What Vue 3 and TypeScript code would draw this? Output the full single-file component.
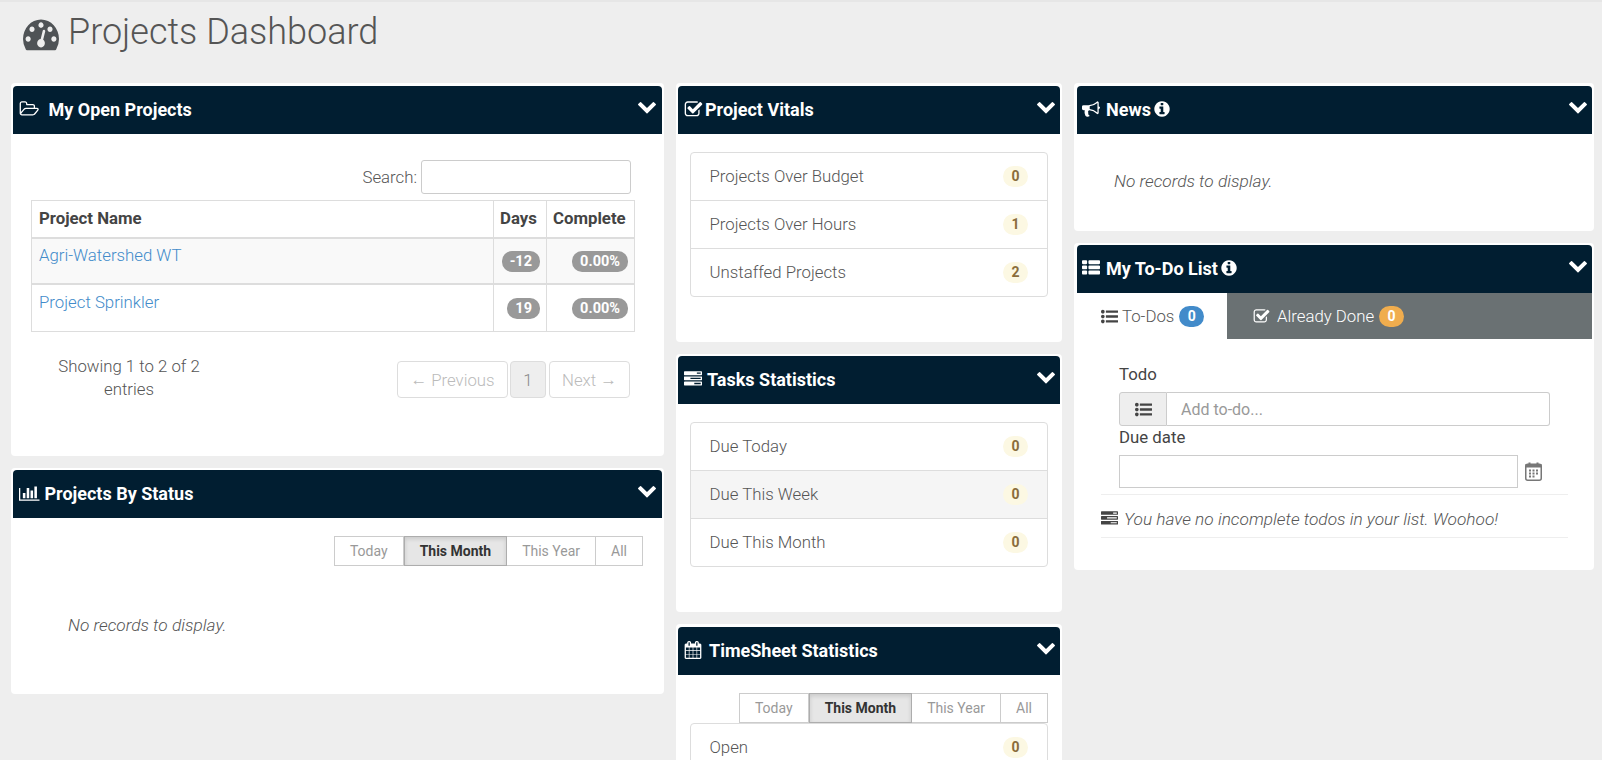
<script setup lang="ts">
interface Icon {
  w: number
  d: string
}

const icons: Record<string, Icon> = {
  gauge: { w: 1792, d: 'M384 1152q0-53-37.5-90.5t-90.5-37.5-90.5 37.5-37.5 90.5 37.5 90.5 90.5 37.5 90.5-37.5 37.5-90.5zm192-448q0-53-37.5-90.5t-90.5-37.5-90.5 37.5-37.5 90.5 37.5 90.5 90.5 37.5 90.5-37.5 37.5-90.5zm428 481l101-382q6-26-7.5-48.5t-38.5-29.5-48 6.5-30 39.5l-101 382q-60 5-107 43.5t-63 98.5q-20 77 20 146t117 89 146-20 89-117q16-60-6-117t-72-91zm660-33q0-53-37.5-90.5t-90.5-37.5-90.5 37.5-37.5 90.5 37.5 90.5 90.5 37.5 90.5-37.5 37.5-90.5zm-640-640q0-53-37.5-90.5t-90.5-37.5-90.5 37.5-37.5 90.5 37.5 90.5 90.5 37.5 90.5-37.5 37.5-90.5zm448 192q0-53-37.5-90.5t-90.5-37.5-90.5 37.5-37.5 90.5 37.5 90.5 90.5 37.5 90.5-37.5 37.5-90.5zm320 448q0 261-141 483-19 29-54 29h-1402q-35 0-54-29-141-221-141-483 0-182 71-348t191-286 286-191 348-71 348 71 286 191 191 286 71 348z' },
  chevron: { w: 1792, d: 'M1683 808l-742 741q-19 19-45 19t-45-19l-742-741q-19-19-19-45.5t19-45.5l166-165q19-19 45-19t45 19l531 531 531-531q19-19 45-19t45 19l166 165q19 19 19 45.5t-19 45.5z' },
  folder: { w: 2048, d: 'M1845 931q0-35-53-35h-1088q-40 0-85.5 21.5t-71.5 52.5l-294 363q-18 24-18 40 0 35 53 35h1088q40 0 86-22t71-53l294-363q18-22 18-39zm-1141-163h768v-160q0-40-28-68t-68-28h-576q-40 0-68-28t-28-68v-64q0-40-28-68t-68-28h-320q-40 0-68 28t-28 68v853l256-315q44-53 116-87.5t140-34.5zm1269 163q0 62-46 120l-295 363q-43 53-116 87.5t-140 34.5h-1088q-92 0-158-66t-66-158v-960q0-92 66-158t158-66h320q92 0 158 66t66 158v32h544q92 0 158 66t66 158v160h192q54 0 99 24.5t67 70.5q15 32 15 68z' },
  bars: { w: 2048, d: 'M640 896v512h-256v-512h256zm384-512v1024h-256v-1024h256zm1024 1152v128h-2048v-1280h128v1152h1920zm-640-896v768h-256v-768h256zm384-384v1152h-256v-1152h256z' },
  check: { w: 1792, d: 'M1472 930v318q0 119-84.5 203.5t-203.5 84.5h-832q-119 0-203.5-84.5t-84.5-203.5v-832q0-119 84.5-203.5t203.5-84.5h832q63 0 117 25 15 7 18 23 3 17-9 29l-49 49q-10 10-23 10-3 0-9-2-23-6-45-6h-832q-66 0-113 47t-47 113v832q0 66 47 113t113 47h832q66 0 113-47t47-113v-254q0-13 9-22l64-64q10-10 23-10 6 0 12 3 20 8 20 29zm231-489l-814 814q-24 24-57 24t-57-24l-430-430q-24-24-24-57t24-57l110-110q24-24 57-24t57 24l263 263 647-647q24-24 57-24t57 24l110 110q24 24 24 57t-24 57z' },
  tasks: { w: 1792, d: 'M1024 1408h640v-128h-640v128zm-384-512h1024v-128h-1024v128zm640-512h384v-128h-384v128zm512 832v256q0 26-19 45t-45 19h-1664q-26 0-45-19t-19-45v-256q0-26 19-45t45-19h1664q26 0 45 19t19 45zm0-512v256q0 26-19 45t-45 19h-1664q-26 0-45-19t-19-45v-256q0-26 19-45t45-19h1664q26 0 45 19t19 45zm0-512v256q0 26-19 45t-45 19h-1664q-26 0-45-19t-19-45v-256q0-26 19-45t45-19h1664q26 0 45 19t19 45z' },
  calendar: { w: 1792, d: 'M192 1664h288v-288h-288v288zm352 0h320v-288h-320v288zm-352-352h288v-320h-288v320zm352 0h320v-320h-320v320zm-352-384h288v-288h-288v288zm736 736h320v-288h-320v288zm-384-736h320v-288h-320v288zm768 736h288v-288h-288v288zm-384-352h320v-320h-320v320zm-352-864v-288q0-13-9.5-22.5t-22.5-9.5h-64q-13 0-22.5 9.5t-9.5 22.5v288q0 13 9.5 22.5t22.5 9.5h64q13 0 22.5-9.5t9.5-22.5zm736 864h288v-320h-288v320zm-384-384h320v-288h-320v288zm384 0h288v-288h-288v288zm32-480v-288q0-13-9.5-22.5t-22.5-9.5h-64q-13 0-22.5 9.5t-9.5 22.5v288q0 13 9.5 22.5t22.5 9.5h64q13 0 22.5-9.5t9.5-22.5zm384-64v1280q0 52-38 90t-90 38h-1408q-52 0-90-38t-38-90v-1280q0-52 38-90t90-38h128v-96q0-66 47-113t113-47h64q66 0 113 47t47 113v96h384v-96q0-66 47-113t113-47h64q66 0 113 47t47 113v96h128q52 0 90 38t38 90z' },
  bullhorn: { w: 1792, d: 'M1664 640q53 0 90.5 37.5t37.5 90.5-37.5 90.5-90.5 37.5v384q0 52-38 90t-90 38q-417-347-812-380-58 19-91 66t-31 100.5 40 92.5q-20 33-23 65.5t6 58 33.5 55 48 50 61.5 50.5q-29 58-111.5 83t-168.5 11.5-132-55.5q-7-23-29.5-87.5t-32-94.5-23-89-15-101 3.5-98.5 22-110.5h-122q-66 0-113-47t-47-113v-192q0-66 47-113t113-47h480q435 0 896-384 52 0 90 38t38 90v384zm-128 604v-954q-394 302-768 343v270q377 42 768 341z' },
  info: { w: 1792, d: 'M1152 1376v-160q0-14-9-23t-23-9h-96v-512q0-14-9-23t-23-9h-320q-14 0-23 9t-9 23v160q0 14 9 23t23 9h96v320h-96q-14 0-23 9t-9 23v160q0 14 9 23t23 9h448q14 0 23-9t9-23zm-128-896v-160q0-14-9-23t-23-9h-192q-14 0-23 9t-9 23v160q0 14 9 23t23 9h192q14 0 23-9t9-23zm640 416q0 209-103 385.5t-279.5 279.5-385.5 103-385.5-103-279.5-279.5-103-385.5 103-385.5 279.5-279.5 385.5-103 385.5 103 279.5 279.5 103 385.5z' },
  thList: { w: 1792, d: 'M512 1248v192q0 40-28 68t-68 28h-320q-40 0-68-28t-28-68v-192q0-40 28-68t68-28h320q40 0 68 28t28 68zm0-512v192q0 40-28 68t-68 28h-320q-40 0-68-28t-28-68v-192q0-40 28-68t68-28h320q40 0 68 28t28 68zm1280 512v192q0 40-28 68t-68 28h-960q-40 0-68-28t-28-68v-192q0-40 28-68t68-28h960q40 0 68 28t28 68zm-1280-1024v192q0 40-28 68t-68 28h-320q-40 0-68-28t-28-68v-192q0-40 28-68t68-28h320q40 0 68 28t28 68zm1280 512v192q0 40-28 68t-68 28h-960q-40 0-68-28t-28-68v-192q0-40 28-68t68-28h960q40 0 68 28t28 68zm0-512v192q0 40-28 68t-68 28h-960q-40 0-68-28t-28-68v-192q0-40 28-68t68-28h960q40 0 68 28t28 68z' },
  listUl: { w: 1792, d: 'M384 1408q0 80-56 136t-136 56-136-56-56-136 56-136 136-56 136 56 56 136zm0-512q0 80-56 136t-136 56-136-56-56-136 56-136 136-56 136 56 56 136zm1408 416v192q0 13-9.5 22.5t-22.5 9.5h-1216q-13 0-22.5-9.5t-9.5-22.5v-192q0-13 9.5-22.5t22.5-9.5h1216q13 0 22.5 9.5t9.5 22.5zm-1408-928q0 80-56 136t-136 56-136-56-56-136 56-136 136-56 136 56 56 136zm1408 416v192q0 13-9.5 22.5t-22.5 9.5h-1216q-13 0-22.5-9.5t-9.5-22.5v-192q0-13 9.5-22.5t22.5-9.5h1216q13 0 22.5 9.5t9.5 22.5zm0-512v192q0 13-9.5 22.5t-22.5 9.5h-1216q-13 0-22.5-9.5t-9.5-22.5v-192q0-13 9.5-22.5t22.5-9.5h1216q13 0 22.5 9.5t9.5 22.5z' },
}

const box = (name: string): string => `0 0 ${icons[name].w} 1792`

const projects = [
  { name: 'Agri-Watershed WT', days: '-12', complete: '0.00%' },
  { name: 'Project Sprinkler', days: '19', complete: '0.00%' },
]

const vitals = [
  { label: 'Projects Over Budget', count: 0 },
  { label: 'Projects Over Hours', count: 1 },
  { label: 'Unstaffed Projects', count: 2 },
]

const taskStats = [
  { label: 'Due Today', count: 0 },
  { label: 'Due This Week', count: 0, hover: true },
  { label: 'Due This Month', count: 0 },
]

const ranges = ['Today', 'This Month', 'This Year', 'All']
</script>

<template>
  <div class="page">
    <h1 class="page-title">
      <svg class="title-icon" :viewBox="box('gauge')" preserveAspectRatio="none"><path :d="icons.gauge.d" /></svg>
      Projects Dashboard
    </h1>

    <div class="columns">
      <div class="col col-left">
        <section class="card">
          <header class="card-head">
            <svg class="head-icon folder" :viewBox="box('folder')"><path :d="icons.folder.d" /></svg>
            <h2>My Open Projects</h2>
            <svg class="chevron" :viewBox="box('chevron')"><path :d="icons.chevron.d" /></svg>
          </header>
          <div class="projects-body">
            <label class="search">Search: <input type="text" /></label>
            <table class="projects">
              <thead>
                <tr>
                  <th>Project Name</th>
                  <th class="days">Days</th>
                  <th class="complete">Complete</th>
                </tr>
              </thead>
              <tbody>
                <tr v-for="(p, i) in projects" :key="p.name" :class="{ odd: i === 0 }">
                  <td class="name"><a>{{ p.name }}</a></td>
                  <td class="num"><span class="pill">{{ p.days }}</span></td>
                  <td class="num"><span class="pill">{{ p.complete }}</span></td>
                </tr>
              </tbody>
            </table>
            <div class="table-foot">
              <div class="info-text">Showing 1 to 2 of 2 entries</div>
              <div class="pager">
                <span class="page-btn prev"><span class="arrow">←</span> Previous</span>
                <span class="page-btn current">1</span>
                <span class="page-btn next">Next <span class="arrow">→</span></span>
              </div>
            </div>
          </div>
        </section>

        <section class="card">
          <header class="card-head">
            <svg class="head-icon bars" :viewBox="box('bars')"><path :d="icons.bars.d" /></svg>
            <h2>Projects By Status</h2>
            <svg class="chevron" :viewBox="box('chevron')"><path :d="icons.chevron.d" /></svg>
          </header>
          <div class="status-body">
            <div class="range">
              <button v-for="r in ranges" :key="r" type="button" :class="{ active: r === 'This Month' }">{{ r }}</button>
            </div>
            <p class="empty status-empty">No records to display.</p>
          </div>
        </section>
      </div>

      <div class="col col-mid">
        <section class="card">
          <header class="card-head">
            <svg class="head-icon check" :viewBox="box('check')"><path :d="icons.check.d" /></svg>
            <h2>Project Vitals</h2>
            <svg class="chevron" :viewBox="box('chevron')"><path :d="icons.chevron.d" /></svg>
          </header>
          <div class="stat-body">
            <ul class="stat-list">
              <li v-for="v in vitals" :key="v.label">
                {{ v.label }}<span class="count">{{ v.count }}</span>
              </li>
            </ul>
          </div>
        </section>

        <section class="card">
          <header class="card-head">
            <svg class="head-icon tasks" :viewBox="box('tasks')"><path :d="icons.tasks.d" /></svg>
            <h2>Tasks Statistics</h2>
            <svg class="chevron" :viewBox="box('chevron')"><path :d="icons.chevron.d" /></svg>
          </header>
          <div class="stat-body">
            <ul class="stat-list">
              <li v-for="t in taskStats" :key="t.label" :class="{ hovered: t.hover }">
                {{ t.label }}<span class="count">{{ t.count }}</span>
              </li>
            </ul>
          </div>
        </section>

        <section class="card sheet-card">
          <header class="card-head">
            <svg class="head-icon cal" :viewBox="box('calendar')"><path :d="icons.calendar.d" /></svg>
            <h2>TimeSheet Statistics</h2>
            <svg class="chevron" :viewBox="box('chevron')"><path :d="icons.chevron.d" /></svg>
          </header>
          <div class="sheet-body">
            <div class="range">
              <button v-for="r in ranges" :key="r" type="button" :class="{ active: r === 'This Month' }">{{ r }}</button>
            </div>
            <ul class="stat-list">
              <li>Open<span class="count">0</span></li>
            </ul>
          </div>
        </section>
      </div>

      <div class="col col-right">
        <section class="card">
          <header class="card-head">
            <svg class="head-icon horn" :viewBox="box('bullhorn')"><path :d="icons.bullhorn.d" /></svg>
            <h2>News</h2>
            <svg class="info" :viewBox="box('info')"><path :d="icons.info.d" /></svg>
            <svg class="chevron" :viewBox="box('chevron')"><path :d="icons.chevron.d" /></svg>
          </header>
          <p class="empty news-empty">No records to display.</p>
        </section>

        <section class="card">
          <header class="card-head">
            <svg class="head-icon horn" :viewBox="box('thList')"><path :d="icons.thList.d" /></svg>
            <h2>My To-Do List</h2>
            <svg class="info" :viewBox="box('info')"><path :d="icons.info.d" /></svg>
            <svg class="chevron" :viewBox="box('chevron')"><path :d="icons.chevron.d" /></svg>
          </header>
          <div class="tabs">
            <div class="tab tab-on">
              <svg class="tab-icon" :viewBox="box('listUl')"><path :d="icons.listUl.d" /></svg>
              To-Dos <span class="tab-badge blue">0</span>
            </div>
            <div class="tab tab-off">
              <svg class="tab-icon check-tab" :viewBox="box('check')"><path :d="icons.check.d" /></svg>
              Already Done <span class="tab-badge orange">0</span>
            </div>
          </div>
          <div class="todo-body">
            <form class="todo-form" @submit.prevent>
              <label class="field-label">Todo</label>
              <div class="input-group">
                <span class="addon">
                  <svg viewBox="0 0 1792 1792"><path :d="icons.listUl.d" /></svg>
                </span>
                <input type="text" placeholder="Add to-do..." />
              </div>
              <label class="field-label due">Due date</label>
              <div class="date-row">
                <input type="text" />
                <svg class="date-icon" viewBox="0 0 17 19">
                  <rect x="0.75" y="2.25" width="15.5" height="16" rx="2" fill="#fff" stroke="#777" stroke-width="1.5" />
                  <rect x="0.5" y="2" width="16" height="3.5" fill="#777" />
                  <rect x="3.5" y="0.5" width="2" height="3" fill="#777" />
                  <rect x="11.5" y="0.5" width="2" height="3" fill="#777" />
                  <path d="M4 7.5h2v2H4zM7.5 7.5h2v2h-2zM11 7.5h2v2h-2zM4 10.5h2v2H4zM7.5 10.5h2v2h-2zM11 10.5h2v2h-2zM4 13.5h2v2H4zM7.5 13.5h2v2h-2z" fill="#777" />
                </svg>
              </div>
            </form>
            <div class="todo-note">
              <svg :viewBox="box('tasks')"><path :d="icons.tasks.d" /></svg>
              <em>You have no incomplete todos in your list. Woohoo!</em>
            </div>
          </div>
        </section>
      </div>
    </div>
  </div>
</template>

<style>
html,
body {
  background: #eee;
  height: 760px;
  margin: 0;
  overflow: hidden;
}
</style>

<style scoped>
.page {
  background: #eee;
  border-top: 2px solid #e6e6e6;
  box-sizing: border-box;
  color: #555;
  font-family: Roboto, "Liberation Sans", sans-serif;
  font-size: 16.8px;
  font-weight: 300;
  height: 760px;
  overflow: hidden;
  padding: 0 8px 0 11px;
}

.page-title {
  align-items: center;
  color: #555;
  display: flex;
  font-size: 36px;
  font-weight: 300;
  gap: 9px;
  height: 60px;
  margin: 0 0 21px;
  padding-left: 12px;
}

.title-icon {
  fill: #4f5356;
  height: 39px;
  margin-top: 2px;
  width: 36px;
}

.columns {
  align-items: start;
  display: grid;
  gap: 12px;
  grid-template-columns: 653px 386px 520px;
}

.col {
  display: flex;
  flex-direction: column;
  gap: 12px;
}

.card {
  background: #fff;
  border-radius: 4px;
  padding: 2px 2px 0;
}

.col .card:first-child,
.col .sheet-card {
  padding-top: 3px;
}

.col-right .card {
  padding-left: 3px;
}

.card-head {
  align-items: center;
  background: #011e31;
  border-radius: 4px 4px 0 0;
  box-sizing: border-box;
  color: #fff;
  display: flex;
  height: 48px;
  padding: 0 6px 2px;
}

.col-right .card-head {
  padding-left: 5px;
}

.card-head h2 {
  font-size: 18px;
  font-weight: 700;
  margin: 0;
}

.card-head svg {
  fill: #fff;
  flex: none;
}

.head-icon {
  height: 18px;
  width: 18px;
}

.head-icon.folder {
  margin-right: 9px;
  width: 20.5px;
}

.head-icon.bars {
  margin-right: 5px;
  width: 20.5px;
}

.head-icon.check {
  height: 19px;
  margin-right: 2px;
  width: 19px;
}

.head-icon.tasks {
  margin-right: 5px;
}

.head-icon.cal {
  margin-right: 7px;
}

.head-icon.horn {
  margin-right: 6px;
}

.info {
  height: 18px;
  margin-left: 2px;
  width: 18px;
}

.chevron {
  height: 20px;
  margin: -7px -2px 0 auto;
  width: 20px;
}

.col-left .chevron {
  margin-right: -1px;
}

.projects-body {
  padding: 26px 26px 55px 18px;
}

.search {
  align-items: center;
  display: flex;
  gap: 4px;
  justify-content: flex-end;
  margin: 0 5px 6px 0;
}

.search input {
  border: 1px solid #ccc;
  border-radius: 3px;
  box-sizing: border-box;
  height: 34px;
  width: 210px;
}

.projects {
  border-collapse: collapse;
  table-layout: fixed;
  width: 604px;
}

.projects th,
.projects td {
  border: 1px solid #ddd;
  box-sizing: border-box;
}

.projects th {
  border-bottom-width: 2px;
  color: #444;
  font-weight: 700;
  height: 37px;
  padding: 0 6px 2px 7px;
  text-align: left;
}

.projects th.days {
  padding-left: 6px;
  width: 53px;
}

.projects th.complete {
  padding-left: 6px;
  width: 88px;
}

.projects tbody tr:first-child td {
  border-bottom-width: 2px;
}

.projects td {
  height: 48px;
  padding: 0 6px;
  vertical-align: top;
}

.projects tr.odd td {
  height: 46px;
}

.projects tr.odd {
  background: #f9f9f9;
}

.projects td.name {
  padding: 7px 6px 0 7px;
}

.projects tr.odd td.name {
  padding-top: 6px;
}

.projects a {
  color: #428bca;
}

.projects td.num {
  padding-top: 12px;
  text-align: right;
}

.projects tr.odd td.num {
  padding-top: 11px;
}

.pill {
  background: #999;
  border-radius: 10px;
  color: #fff;
  display: inline-block;
  font-size: 14.5px;
  font-weight: 700;
  line-height: 21px;
  padding: 0 8px;
}

.table-foot {
  align-items: flex-start;
  display: flex;
  justify-content: space-between;
  padding-top: 29px;
}

.info-text {
  line-height: 23px;
  margin: -6px 0 0 18px;
  text-align: center;
  width: 160px;
}

.pager {
  display: flex;
  gap: 2px;
  margin-right: 6px;
}

.page-btn {
  align-items: center;
  border: 1px solid #ddd;
  border-radius: 4px;
  box-sizing: border-box;
  color: #bbb;
  display: flex;
  gap: 4px;
  height: 37px;
  justify-content: center;
}

.arrow {
  font-family: "Liberation Sans", sans-serif;
}

.page-btn.prev {
  width: 111px;
}

.page-btn.current {
  background: #eee;
  color: #888;
  width: 36px;
}

.page-btn.next {
  margin-left: 1px;
  width: 81px;
}

.status-body {
  padding: 18px 19px 0 0;
}

.range {
  display: flex;
  justify-content: flex-end;
}

.range button {
  background: #fff;
  border: 1px solid #ccc;
  border-left-width: 0;
  color: #999;
  font-family: inherit;
  font-size: 14px;
  font-weight: 400;
  height: 30px;
  padding: 0 15px;
}

.range button:first-child {
  border-left-width: 1px;
}

.range button.active {
  background: #e6e6e6;
  border-color: #adadad;
  border-left-width: 1px;
  box-shadow: inset 0 2px 4px rgba(0, 0, 0, 0.125);
  color: #333;
  font-weight: 700;
}

.empty {
  font-size: 17.3px;
  font-style: italic;
  line-height: 20px;
  margin: 0;
}

.status-empty {
  padding: 49px 0 59px 55px;
}

.stat-body {
  padding: 18px 12px 45px;
}

.stat-list {
  border: 1px solid #ddd;
  border-radius: 4px;
  list-style: none;
  margin: 0;
  padding: 0;
}

.stat-list li {
  align-items: center;
  box-sizing: content-box;
  display: flex;
  height: 45px;
  justify-content: space-between;
  padding: 0 19px 2px 18.5px;
}

.stat-list li + li {
  border-top: 1px solid #ddd;
}

.stat-list li.hovered {
  background: #f5f5f5;
}

.count {
  background: #fcf8e3;
  border-radius: 11px;
  color: #8a6d3b;
  font-size: 14px;
  font-weight: 700;
  line-height: 21px;
  margin-top: 2px;
  text-align: center;
  width: 25px;
}

.sheet-body {
  padding: 18px 12px 40px;
}

.news-empty {
  padding: 37px 0 40px 37px;
}

.tabs {
  display: flex;
  height: 46px;
}

.tab {
  align-items: center;
  display: flex;
  gap: 4px;
}

.tab-on {
  box-sizing: border-box;
  padding-left: 24px;
  width: 150px;
}

.tab-off {
  background: #6a7173;
  color: #fff;
  flex: 1;
  padding-left: 26px;
}

.tab-icon {
  fill: #444;
  height: 17px;
  width: 17px;
}

.check-tab {
  fill: #fff;
  margin-right: 3px;
}

.tab-badge {
  border-radius: 11px;
  color: #fff;
  font-size: 14px;
  font-weight: 700;
  line-height: 21px;
  margin-left: 1px;
  text-align: center;
  width: 25px;
}

.tab-badge.blue {
  background: #428bca;
}

.tab-badge.orange {
  background: #f0ad4e;
}

.todo-body {
  padding: 23px 24px 32px;
}

.todo-form {
  display: flex;
  flex-direction: column;
  padding: 0 0 6px 18px;
}

.field-label {
  color: #444;
  font-weight: 400;
  line-height: 24px;
  margin-bottom: 6px;
}

.field-label.due {
  line-height: 20px;
  margin: 1px 0 8px;
}

.input-group {
  display: flex;
  height: 34px;
  width: 431px;
}

.addon {
  align-items: center;
  background: #eee;
  border: 1px solid #ccc;
  border-radius: 3px 0 0 3px;
  box-sizing: border-box;
  display: flex;
  justify-content: center;
  width: 48px;
}

.addon svg {
  fill: #444;
  height: 17px;
  width: 17px;
}

.input-group input {
  border: 1px solid #ccc;
  border-left: 0;
  border-radius: 0 3px 3px 0;
  box-sizing: border-box;
  flex: 1;
  font-family: inherit;
  font-size: 16px;
  font-weight: 400;
  padding: 0 14px;
}

.input-group input::placeholder {
  color: #999;
}

.date-row {
  align-items: center;
  display: flex;
  gap: 7px;
  height: 33px;
}

.date-row input {
  border: 1px solid #ccc;
  box-sizing: border-box;
  height: 33px;
  width: 399px;
}

.date-icon {
  height: 19px;
  width: 17px;
}

.todo-note {
  align-items: center;
  border-bottom: 1px solid #eee;
  border-top: 1px solid #eee;
  box-sizing: border-box;
  display: flex;
  font-size: 17.3px;
  gap: 6px;
  height: 44px;
  padding-top: 5px;
}

.todo-note svg {
  fill: #444;
  height: 17px;
  width: 17px;
}
</style>
